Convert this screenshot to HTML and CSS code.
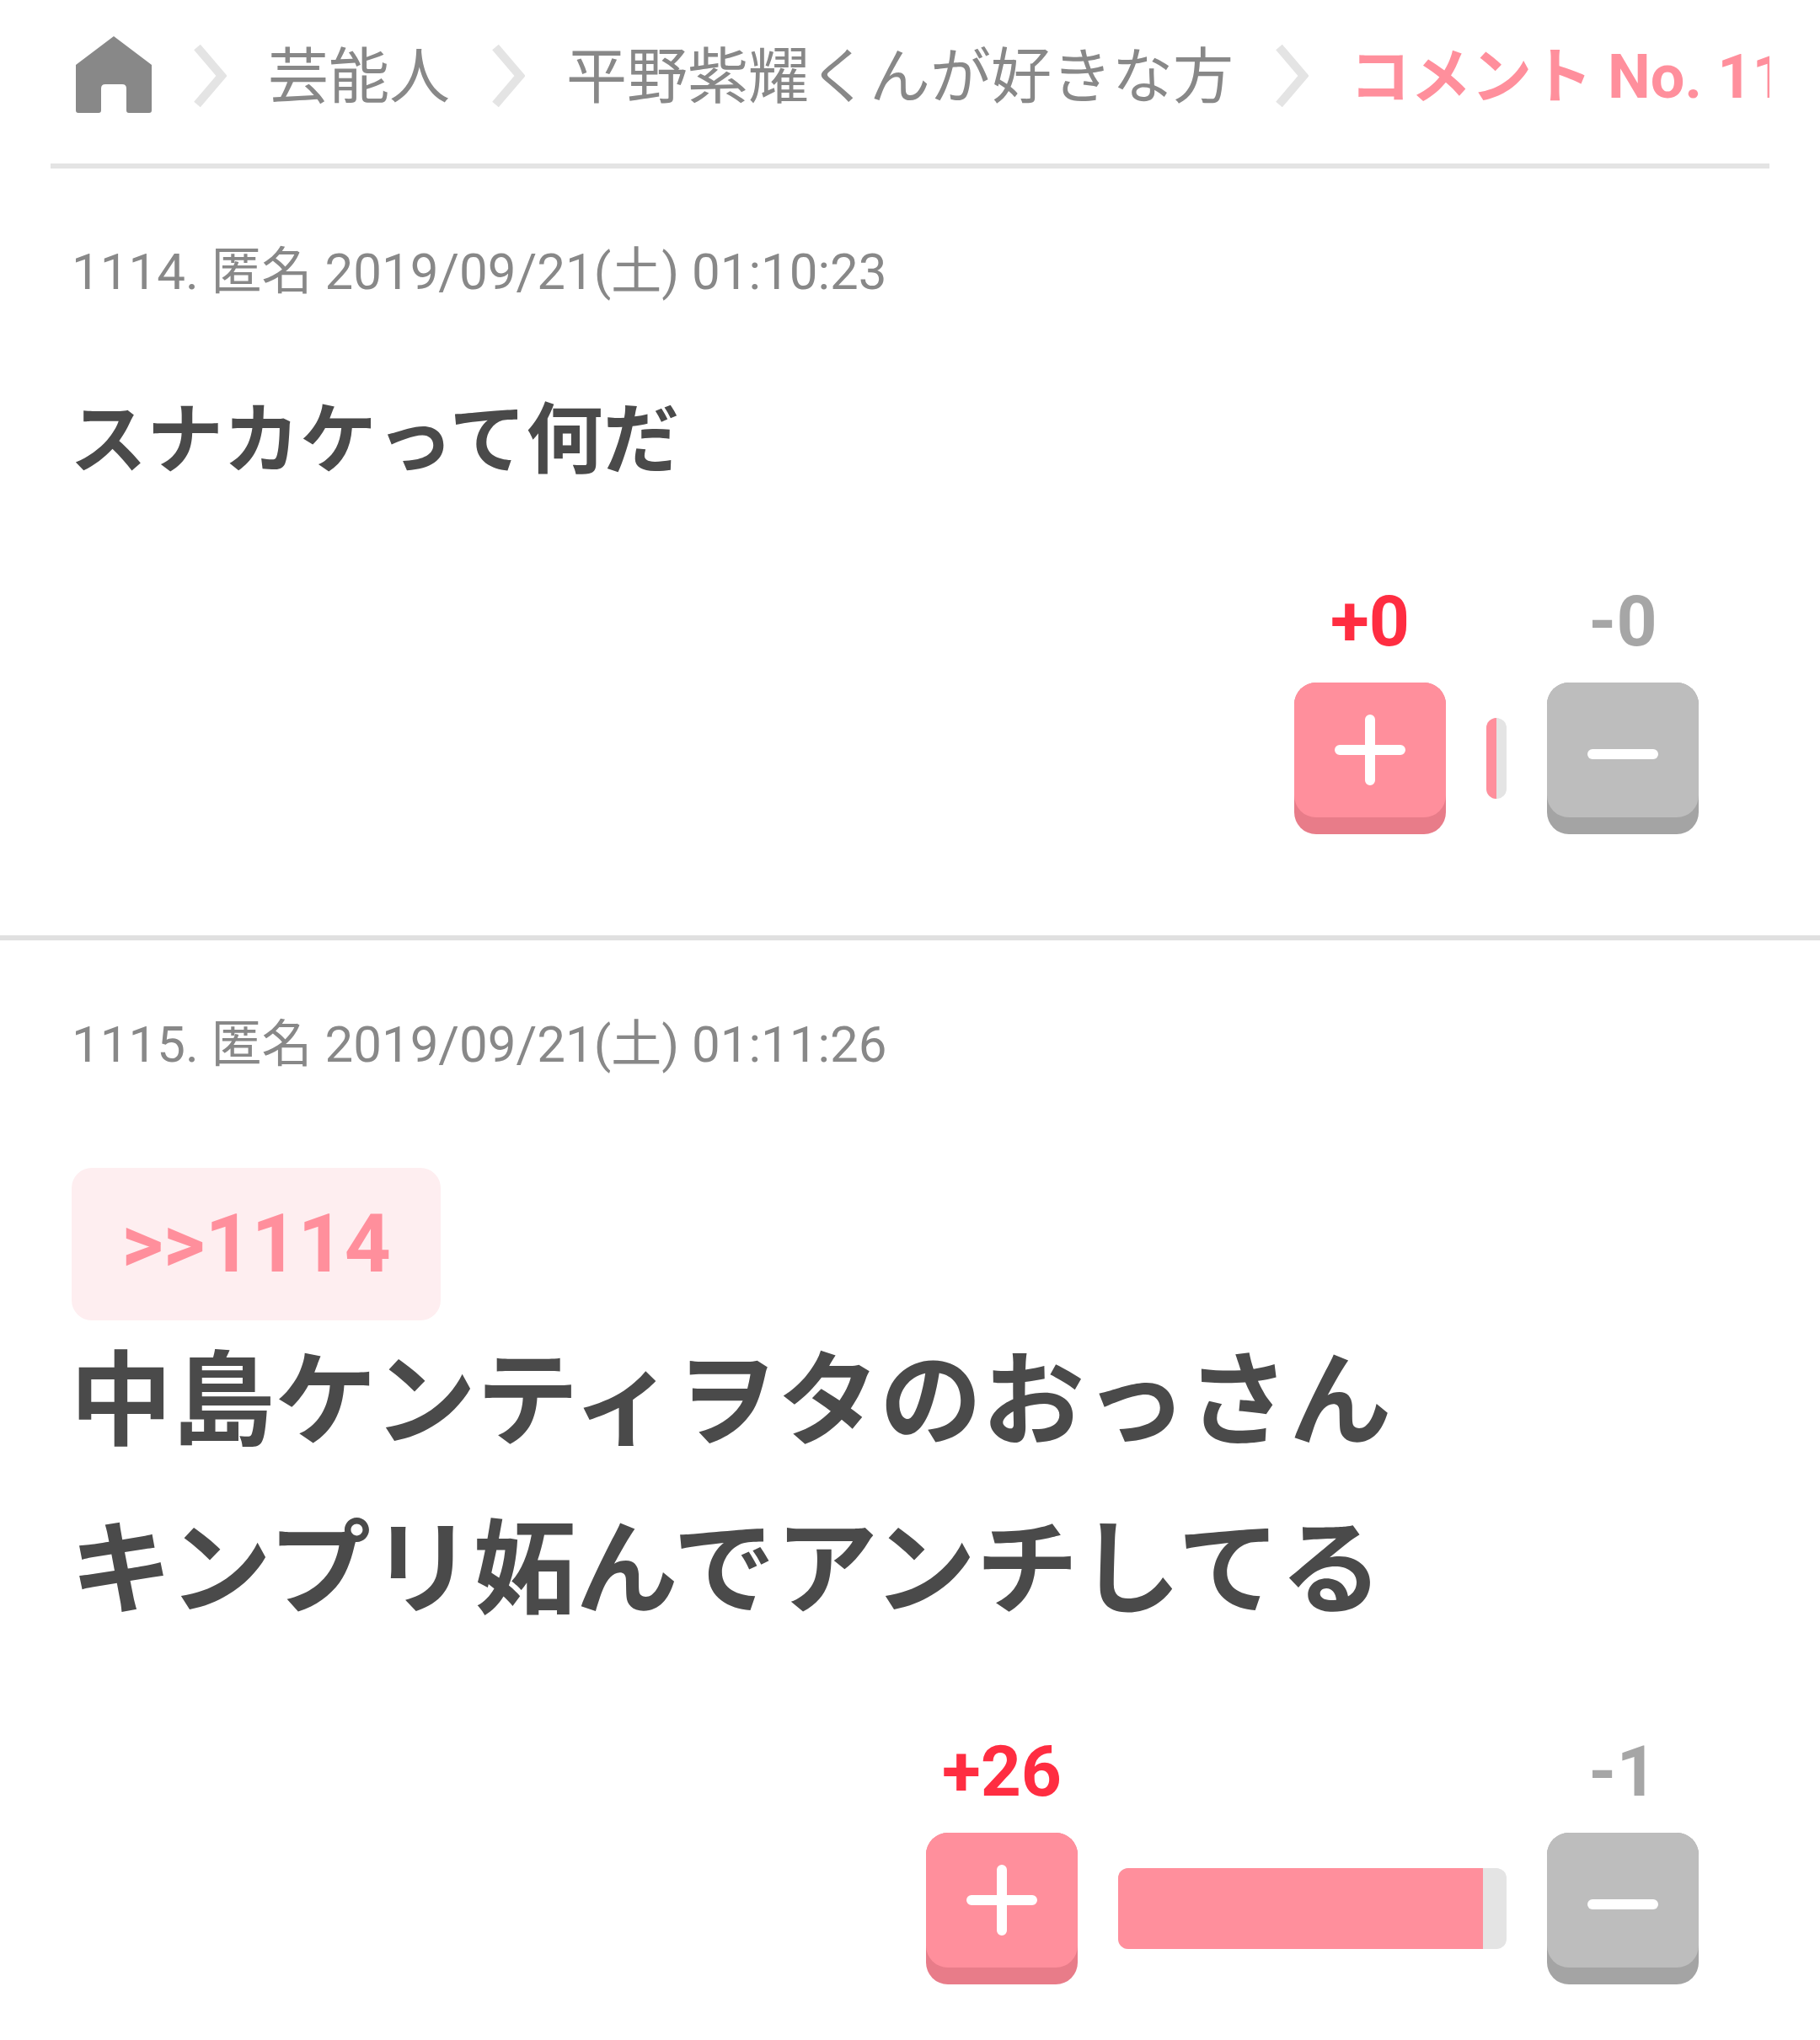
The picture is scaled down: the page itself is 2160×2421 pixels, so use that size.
FILE: index.html
```html
<!DOCTYPE html>
<html lang="ja">
<head>
  <meta charset="UTF-8">
  <title>コメント No. 1115</title>
  <link rel="stylesheet" href="styles.css">
</head>
<body>
  <nav class="crumbs">
    <svg class="home" viewBox="0 0 90 92" width="90" height="92">
      <path fill="#888" d="M45 0L90 34V88Q90 91 87 91H63Q60 91 60 88V62Q60 57 55 57H35Q30 57 30 62V88Q30 91 27 91H3Q0 91 0 88V34Z"/>
    </svg>
    <svg class="chev" viewBox="0 0 40 74" width="40" height="74"><path d="M5 3L34 37L5 71"/></svg>
    <span class="crumb">芸能人</span>
    <svg class="chev" viewBox="0 0 40 74" width="40" height="74"><path d="M5 3L34 37L5 71"/></svg>
    <span class="crumb">平野紫耀くんが好きな方</span>
    <svg class="chev" viewBox="0 0 40 74" width="40" height="74"><path d="M5 3L34 37L5 71"/></svg>
    <span class="crumb current">コメント No. 1115</span>
  </nav>

  <section class="comment first">
    <div class="meta">1114. 匿名 2019/09/21(土) 01:10:23</div>
    <p class="body small">スナカケって何だ</p>
    <div class="votes">
      <div class="vote">
        <div class="count plus">+0</div>
        <div class="btn btn-plus">
          <div class="face">
            <svg viewBox="0 0 84 84" width="84" height="84"><path d="M6 42H78M42 6V78"/></svg>
          </div>
        </div>
      </div>
      <div class="bar" style="width: 24px;"><div class="bar-fill" style="width: 50%;"></div></div>
      <div class="vote">
        <div class="count minus">-0</div>
        <div class="btn btn-minus">
          <div class="face">
            <svg viewBox="0 0 84 84" width="84" height="84"><path d="M6 47H78"/></svg>
          </div>
        </div>
      </div>
    </div>
  </section>

  <section class="comment second">
    <div class="meta">1115. 匿名 2019/09/21(土) 01:11:26</div>
    <a class="anchor">&gt;&gt;1114</a>
    <p class="body">中島ケンティヲタのおっさん<br>キンプリ妬んでアンチしてる</p>
    <div class="votes">
      <div class="vote">
        <div class="count plus">+26</div>
        <div class="btn btn-plus">
          <div class="face">
            <svg viewBox="0 0 84 84" width="84" height="84"><path d="M6 42H78M42 6V78"/></svg>
          </div>
        </div>
      </div>
      <div class="bar" style="width: 461px;"><div class="bar-fill" style="width: 94%;"></div></div>
      <div class="vote">
        <div class="count minus">-1</div>
        <div class="btn btn-minus">
          <div class="face">
            <svg viewBox="0 0 84 84" width="84" height="84"><path d="M6 47H78"/></svg>
          </div>
        </div>
      </div>
    </div>
  </section>
</body>
</html>
```

FILE: styles.css
```css
* { box-sizing: border-box; }
body {
  margin: 0;
  background: #fff;
  font-family: Roboto, "Noto Sans CJK JP", sans-serif;
  color: #4a4a4a;
  height: 2421px;
  overflow: hidden;
}
.crumbs {
  margin: 0 60px;
  height: 200px;
  padding: 43px 0 0 30px;
  border-bottom: 6px solid #e4e4e4;
  display: flex;
  align-items: flex-start;
  gap: 49px;
  overflow: hidden;
  white-space: nowrap;
}
.home { flex: none; }
.chev {
  flex: none;
  margin-top: 10px;
}
.chev path {
  fill: none;
  stroke: #e4e4e4;
  stroke-width: 10;
}
.crumb {
  flex: none;
  margin-top: 4px;
  font-size: 72px;
  line-height: 90px;
  color: #888;
}
.current {
  color: #ff8f9c;
  font-weight: 700;
}
.comment {
  padding: 0 144px 120px 85px;
}
.first {
  border-bottom: 6px solid #e0e0e0;
}
.meta {
  font-size: 60px;
  line-height: 80px;
  color: #888;
}
.first .meta { margin-top: 83px; }
.second .meta { margin-top: 84px; }
.body {
  margin: -3px 0 0 -2px;
  font-size: 121.5px;
  line-height: 200px;
  font-weight: 700;
  white-space: nowrap;
}
.body.small {
  margin: 100px 0 0 -2px;
  font-size: 91px;
  line-height: 120px;
}
.anchor {
  display: block;
  width: 438px;
  height: 181px;
  margin-top: 106px;
  background: #feeef0;
  border-radius: 24px;
  color: #ff8f9c;
  font-size: 96px;
  font-weight: 700;
  line-height: 181px;
  text-align: center;
}
.votes {
  display: flex;
  justify-content: flex-end;
  align-items: flex-end;
  gap: 48px;
  margin-top: 113px;
}
.second .votes { margin-top: 97px; }
.vote { width: 180px; }
.count {
  font-size: 84px;
  font-weight: 700;
  line-height: 84px;
  text-align: center;
  margin-bottom: 30px;
}
.plus { color: #ff2d41; }
.minus { color: #a6a6a6; }
.btn {
  height: 180px;
  border-radius: 26px;
}
.face {
  height: 160px;
  border-radius: 26px;
  display: flex;
  align-items: center;
  justify-content: center;
}
.face path {
  fill: none;
  stroke: #fff;
  stroke-width: 12;
  stroke-linecap: round;
}
.btn-plus { background: #e87c89; }
.btn-plus .face { background: #ff8f9c; }
.btn-minus { background: #a4a4a4; }
.btn-minus .face { background: #bdbdbd; }
.bar {
  height: 96px;
  margin-bottom: 42px;
  border-radius: 12px;
  background: #e4e4e4;
  overflow: hidden;
}
.bar-fill {
  height: 100%;
  background: #ff8f9c;
}
```
